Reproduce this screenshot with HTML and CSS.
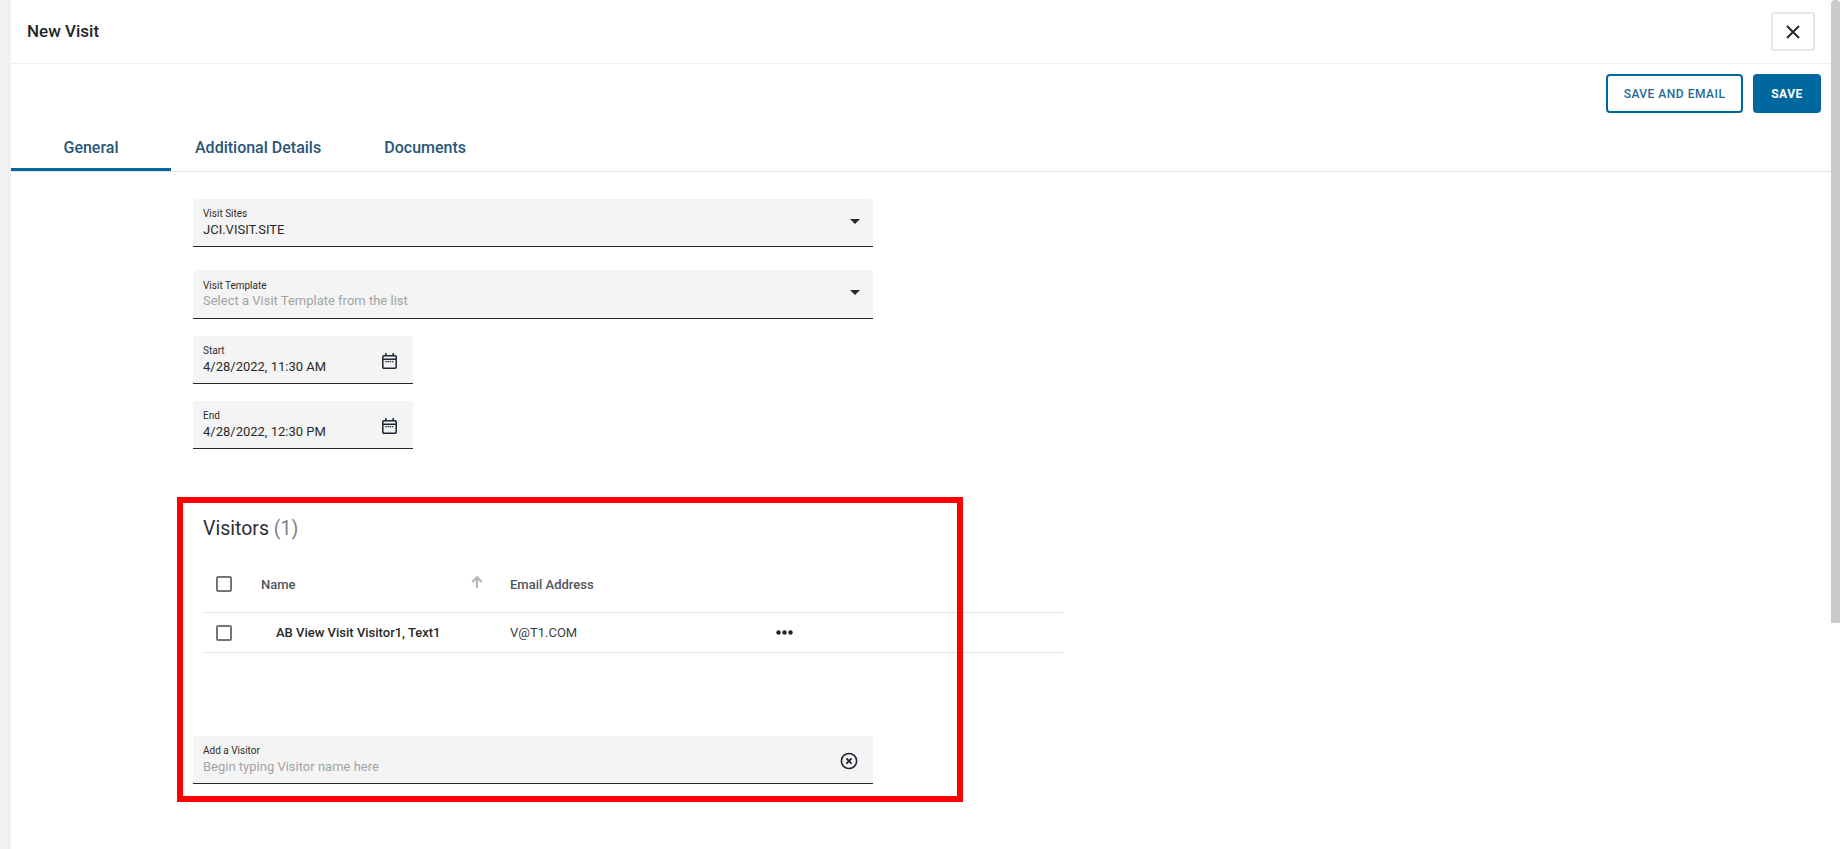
FILE: index.html
```html
<!DOCTYPE html>
<html lang="en">
<head>
<meta charset="utf-8">
<title>New Visit</title>
<link rel="stylesheet" href="styles.css">
</head>
<body>
<div class="strip"></div>
<main class="panel">
  <header class="head">
    <h1 class="title">New Visit</h1>
    <button class="close" aria-label="Close">
      <svg width="14" height="14" viewBox="0 0 14 14"><path d="M1 1l12 12M13 1L1 13" fill="none" stroke="#1b2430" stroke-width="1.8"/></svg>
    </button>
  </header>
  <div class="actions">
    <button class="btn btn-outline">SAVE AND EMAIL</button>
    <button class="btn btn-solid">SAVE</button>
  </div>
  <nav class="tabs">
    <a class="tab tab-active">General</a>
    <a class="tab">Additional Details</a>
    <a class="tab">Documents</a>
  </nav>
  <div class="form">
    <div class="field field-wide field-first">
      <div class="field-text"><span class="label">Visit Sites</span><span class="value">JCI.VISIT.SITE</span></div>
      <span class="caret"></span>
    </div>
    <div class="field field-wide field-second">
      <div class="field-text"><span class="label">Visit Template</span><span class="value placeholder">Select a Visit Template from the list</span></div>
      <span class="caret"></span>
    </div>
    <div class="field field-date">
      <div class="field-text"><span class="label">Start</span><span class="value">4/28/2022, 11:30 AM</span></div>
      <svg class="cal" width="15" height="16" viewBox="0 0 15 16"><path d="M.8 3.800a1.100 1.100 0 0 1 1.100-1.100h11.200a1.100 1.100 0 0 1 1.100 1.100v10.300a1.100 1.100 0 0 1-1.100 1.100H1.900a1.100 1.100 0 0 1-1.100-1.100zM.8 6.200h13.400M3.800 0v2.700M11.200 0v2.700" fill="none" stroke="#1b2430" stroke-width="1.500"/><path d="M3.300 8h1.400v1.300H3.300zM5.500 8h1.400v1.300H5.500zM7.700 8h1.400v1.300H7.700zM9.900 8h1.400v1.300H9.900z" fill="#1b2430"/></svg>
    </div>
    <div class="field field-date">
      <div class="field-text"><span class="label">End</span><span class="value">4/28/2022, 12:30 PM</span></div>
      <svg class="cal" width="15" height="16" viewBox="0 0 15 16"><path d="M.8 3.800a1.100 1.100 0 0 1 1.100-1.100h11.200a1.100 1.100 0 0 1 1.100 1.100v10.300a1.100 1.100 0 0 1-1.100 1.100H1.900a1.100 1.100 0 0 1-1.100-1.100zM.8 6.200h13.400M3.800 0v2.700M11.200 0v2.700" fill="none" stroke="#1b2430" stroke-width="1.500"/><path d="M3.300 8h1.400v1.300H3.300zM5.500 8h1.400v1.300H5.500zM7.700 8h1.400v1.300H7.700zM9.900 8h1.400v1.300H9.900z" fill="#1b2430"/></svg>
    </div>
    <section class="visitors">
      <h2 class="visitors-title">Visitors <span class="count">(1)</span></h2>
      <div class="row row-head">
        <span class="check"></span>
        <span class="col-name col-head">Name</span>
        <svg class="sort" width="14" height="14" viewBox="0 0 12 12"><path d="M6 11V2M2 6l4-4 4 4" fill="none" stroke="#b3b3b3" stroke-width="1.800"/></svg>
        <span class="col-email col-head">Email Address</span>
      </div>
      <div class="row row-body">
        <span class="check"></span>
        <span class="col-name visitor-name">AB View Visit Visitor1, Text1</span>
        <span class="col-email email-val">V@T1.COM</span>
        <svg class="more" width="17" height="5" viewBox="0 0 17 5"><circle cx="2.500" cy="2.500" r="2.200"/><circle cx="8.500" cy="2.500" r="2.200"/><circle cx="14.500" cy="2.500" r="2.200"/></svg>
      </div>
    </section>
    <div class="field field-wide field-add">
      <div class="field-text"><span class="label">Add a Visitor</span><span class="value placeholder">Begin typing Visitor name here</span></div>
      <svg class="clear" width="18" height="18" viewBox="0 0 18 18"><circle cx="9" cy="9" r="7.600" fill="none" stroke="#1b2430" stroke-width="1.500"/><path d="M6.400 6.400l5.200 5.200M11.600 6.400l-5.200 5.200" fill="none" stroke="#1b2430" stroke-width="1.800"/></svg>
    </div>
  </div>
  <div class="highlight"></div>
</main>
<div class="scrollbar"><div class="thumb"></div></div>
</body>
</html>
```

FILE: styles.css
```css
* { box-sizing: border-box; }
html, body { margin: 0; height: 849px; overflow: hidden; }
body {
  display: flex;
  background: #fff;
  color: #1b2430;
  font-family: Roboto, "Liberation Sans", sans-serif;
}
.strip { width: 11px; flex: none; background: #f0f1f3; }
.panel { flex: 1; min-width: 0; position: relative; }
.scrollbar { width: 9px; flex: none; background: #fff; }
.thumb { height: 623px; background: #c9cacd; border-radius: 4px 4px 0 0; }

.head {
  height: 64px;
  display: flex;
  align-items: flex-start;
  justify-content: space-between;
  border-bottom: 1px solid #f0f0f0;
  padding: 0 16px 0 16px;
}
.title { margin: 22px 0 0; font-size: 17px; line-height: 19px; font-weight: 500; color: #262626; }
.close {
  width: 44px; height: 39px; margin-top: 12px;
  display: flex; align-items: center; justify-content: center;
  background: #fff; border: 2px solid #e6e6e6; border-radius: 3px; padding: 0;
}

.actions { display: flex; justify-content: flex-end; gap: 10px; padding: 10px 10px 0 0; height: 59px; }
.btn {
  height: 39px; border-radius: 4px; font-family: inherit; font-size: 12px; font-weight: 500;
  letter-spacing: 0.5px; padding: 0;
}
.btn-outline { width: 137px; background: #fff; border: 2px solid #00689e; color: #1f6a9a; }
.btn-solid { width: 68px; background: #00689e; border: 2px solid #00689e; color: #fff; font-weight: 700; }

.tabs { display: flex; height: 49px; border-bottom: 1px solid #e0e0e0; }
.tab {
  min-width: 160px; padding: 0 24px; height: 48px; display: flex; align-items: center; justify-content: center;
  font-size: 16px; font-weight: 500; color: #2a5578;
}
.tab-active { border-bottom: 3px solid #00689e; padding-top: 3px; }

.form { padding: 27px 0 0 182px; }
.field {
  display: flex; align-items: center; justify-content: space-between;
  height: 48px; background: #f4f4f4; border-radius: 4px 4px 0 0; border-bottom: 1px solid #26282c;
  padding: 0 16px 0 10px;
}
.field-wide { width: 680px; padding-right: 13px; }
.field-date { width: 220px; margin-top: 17px; }
.field-second { margin-top: 23px; height: 49px; }
.field-second .value { margin-top: 0; }
.field-text { display: flex; flex-direction: column; }
.label { font-size: 10px; line-height: 12px; color: #2c2c2c; padding-top: 1px; }
.value { font-size: 13px; line-height: 17px; color: #2a2a2a; margin-top: 1px; }
.placeholder { color: #a3a3a3; }
.caret { width: 0; height: 0; border-left: 5.500px solid transparent; border-right: 5.500px solid transparent; border-top: 5.500px solid #26282c; margin-top: -3px; }
.cal { margin-top: 2px; }

.visitors { margin: 0 0 0 10px; padding-top: 68px; width: 860px; }
.visitors-title { margin: 0; font-size: 19.500px; line-height: 24px; font-weight: 400; color: #2b2f36; }
.count { color: #7a808a; }
.row { position: relative; display: flex; align-items: center; border-bottom: 1px solid #e2e2e8; }
.row-head { height: 72px; padding-top: 14px; }
.row-body { height: 40px; }
.check { width: 16px; height: 16px; border: 2px solid #757575; border-radius: 2px; margin-left: 13px; flex: none; }
.col-name { margin-left: 29px; font-size: 13px; }
.col-head { font-weight: 500; color: #50555c; margin-top: 2px; }
.sort { position: absolute; left: 267px; top: 34px; }
.col-email { position: absolute; left: 307px; font-size: 13px; }
.visitor-name { margin-left: 44px; font-weight: 500; color: #2a2a2a; }
.email-val { color: #3a4048; }
.more { position: absolute; left: 573px; top: 17px; fill: #1b2430; }

.field-add { margin-top: 83px; }
.clear { margin: 2px 2px 0 0; }

.highlight {
  position: absolute; left: 166px; top: 497px; width: 786px; height: 305px;
  border: 6px solid #ff0000; pointer-events: none;
}
```
